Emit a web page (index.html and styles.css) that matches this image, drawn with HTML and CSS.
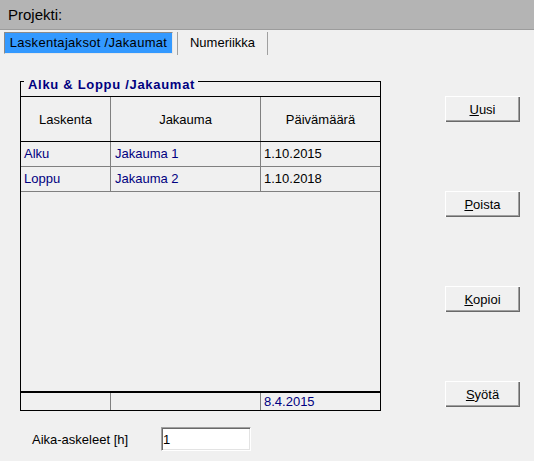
FILE: index.html
```html
<!DOCTYPE html>
<html lang="fi">
<head>
<meta charset="utf-8">
<title>Projekti</title>
<link rel="stylesheet" href="styles.css">
</head>
<body>
<div class="header">Projekti:</div>
<div class="tabs">
  <div class="tab tab-active">Laskentajaksot /Jakaumat</div>
  <div class="tab tab-plain">Numeriikka</div>
</div>
<div class="main">
  <div class="left">
    <div class="group">
      <div class="group-title">Alku &amp; Loppu /Jakaumat</div>
      <div class="table">
        <div class="thead">
          <div class="hcell">Laskenta</div>
          <div class="hcell">Jakauma</div>
          <div class="hcell last">Päivämäärä</div>
        </div>
        <div class="row">
          <div class="cell navy">Alku</div>
          <div class="cell navy c2">Jakauma 1</div>
          <div class="cell last">1.10.2015</div>
        </div>
        <div class="row">
          <div class="cell navy">Loppu</div>
          <div class="cell navy c2">Jakauma 2</div>
          <div class="cell last">1.10.2018</div>
        </div>
        <div class="empty"></div>
        <div class="tfoot">
          <div class="cell"></div>
          <div class="cell"></div>
          <div class="cell last navy">8.4.2015</div>
        </div>
      </div>
    </div>
    <div class="field">
      <label class="field-label" for="step">Aika-askeleet [h]</label>
      <input class="field-input" id="step" type="text" value="1">
    </div>
  </div>
  <div class="buttons">
    <button class="btn"><u>U</u>usi</button>
    <button class="btn"><u>P</u>oista</button>
    <button class="btn"><u>K</u>opioi</button>
    <button class="btn"><u>S</u>yötä</button>
  </div>
</div>
</body>
</html>
```
FILE: styles.css
```css
html, body {
  margin: 0;
  padding: 0;
}
body {
  width: 534px;
  height: 461px;
  overflow: hidden;
  background: #f0f0f0;
  font-family: "Liberation Sans", Arial, sans-serif;
  font-size: 13px;
  color: #000;
}
.header {
  height: 29px;
  line-height: 30px;
  background: #b4b4b4;
  border-bottom: 1px solid #9c9c9c;
  padding-left: 8px;
  font-size: 15px;
}
.tabs {
  display: flex;
  height: 24px;
  padding: 2px 0 0 4px;
}
.tab {
  box-sizing: border-box;
  text-align: center;
}
.tab-active {
  width: 169px;
  height: 22px;
  line-height: 20px;
  background: #3399ff;
  border: 1px solid;
  border-color: #8a8a8a #e6e6e6 #e6e6e6 #8a8a8a;
  letter-spacing: 0.3px;
}
.tab-plain {
  width: 91px;
  height: 23px;
  line-height: 21px;
  margin-left: 4px;
  border-left: 1px solid #a0a0a0;
  border-right: 1px solid #a0a0a0;
}
.main {
  display: flex;
}
.group {
  box-sizing: border-box;
  width: 361px;
  margin: 25px 0 0 20px;
  border: 1px solid #000;
  border-bottom: none;
}
.group-title {
  width: fit-content;
  margin: -5px 0 0 3px;
  padding: 0 3px 0 4px;
  line-height: 15px;
  background: #f0f0f0;
  color: #000080;
  font-weight: bold;
  letter-spacing: 0.7px;
}
.table {
  margin-top: 4px;
  border-top: 1px solid #000;
}
.thead, .row, .tfoot {
  display: grid;
  grid-template-columns: 90px 150px 119px;
}
.thead {
  height: 44px;
  border-bottom: 1px solid #000;
}
.hcell {
  display: flex;
  align-items: center;
  justify-content: center;
  border-right: 1px solid #808080;
}
.row {
  height: 24px;
  border-bottom: 1px solid #808080;
}
.cell {
  border-right: 1px solid #808080;
  padding-left: 3px;
  line-height: 24px;
  white-space: nowrap;
}
.cell.c2 {
  padding-left: 4px;
}
.hcell.last, .cell.last {
  border-right: none;
}
.navy {
  color: #000080;
}
.empty {
  height: 199px;
}
.tfoot {
  height: 17px;
  border-top: 2px solid #000;
  border-bottom: 1px solid #000;
}
.tfoot .cell {
  line-height: 17px;
}
.field {
  display: flex;
  align-items: center;
  margin: 16px 0 0 32px;
}
.field-label {
  width: 129px;
}
.field-input {
  box-sizing: border-box;
  width: 90px;
  height: 24px;
  margin: 0;
  padding: 0 0 0 1px;
  background: #fff;
  border: 1px solid;
  border-color: #a0a0a0 #ffffff #ffffff #a0a0a0;
  box-shadow: inset 1px 1px 0 #696969, inset -1px -1px 0 #e3e3e3;
  font-family: inherit;
  font-size: 13px;
  color: #000;
  outline: none;
}
.buttons {
  display: flex;
  flex-direction: column;
  gap: 69px;
  margin: 40px 0 0 64px;
}
.btn {
  width: 75px;
  height: 26px;
  margin: 0;
  padding: 0;
  border: none;
  background: #f0f0f0;
  box-shadow: inset 1px 1px 0 #ffffff, inset -1px -1px 0 #696969, inset -2px -2px 0 #a0a0a0;
  font-family: inherit;
  font-size: 13px;
  color: #000;
}
.btn u {
  text-decoration: underline;
}
```
